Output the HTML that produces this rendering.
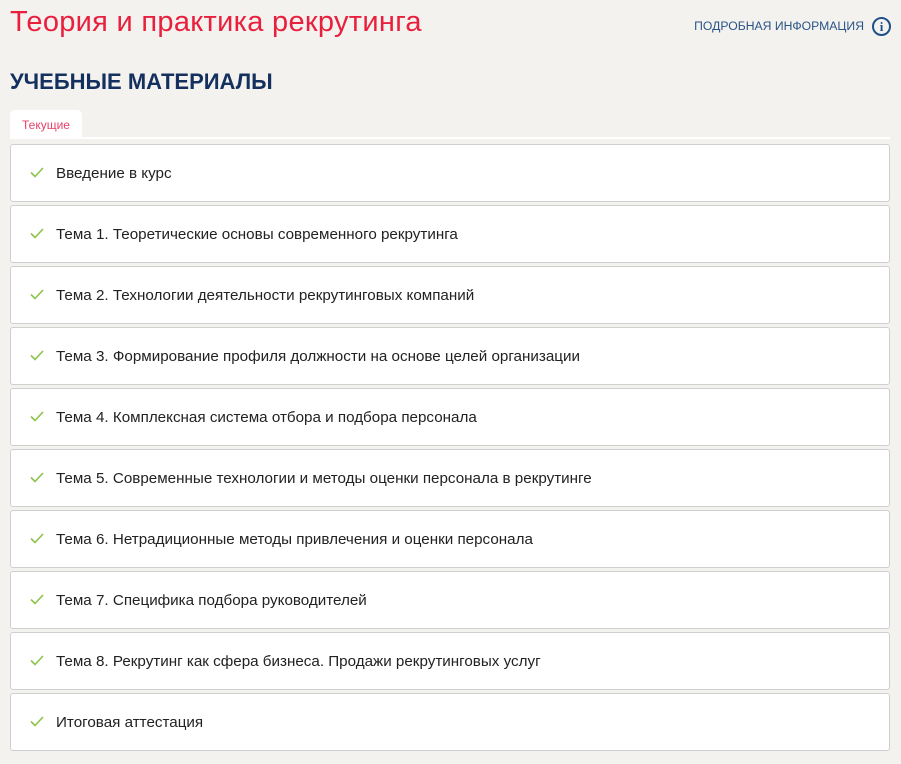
<!DOCTYPE html>
<html><head><meta charset="utf-8"><style>
body{margin:0;background:#f3f2ef;font-family:"Liberation Sans",sans-serif;width:901px;height:764px;overflow:hidden;position:relative}
.t{position:absolute;left:10px;top:6px;font-size:29px;color:#e8203e;letter-spacing:0.3px}
.info{position:absolute;right:37px;top:19px;font-size:12.2px;color:#2a5486}
.ic{position:absolute;left:872px;top:17px;width:15px;height:15px;border:2px solid #1e4f8a;border-radius:50%;color:#1e4f8a;font-size:13px;font-weight:bold;text-align:center;line-height:15px;font-family:"Liberation Serif",serif}
.h{position:absolute;left:10px;top:69px;font-size:22px;font-weight:bold;color:#14305e}
.tab{position:absolute;left:10px;top:110px;width:72px;height:28px;background:#fff;border-radius:5px 5px 0 0;font-size:12px;color:#e8416a;text-align:center;line-height:30px}
.line{position:absolute;left:10px;top:137px;width:880px;height:2px;background:#fff}
.r{position:absolute;left:10px;width:878px;height:56px;background:#fff;border:1px solid #cfcfcf;border-radius:3px;font-size:15.2px;color:#222;line-height:58px}
.r span{position:absolute;left:45px}
.r svg{position:absolute;left:19px;top:22px}
</style></head><body>
<div class="t">Теория и практика рекрутинга</div>
<div class="info">ПОДРОБНАЯ ИНФОРМАЦИЯ</div>
<div class="ic">i</div>
<div class="h">УЧЕБНЫЕ МАТЕРИАЛЫ</div>
<div class="tab">Текущие</div>
<div class="line"></div>
<div class="r" style="top:144px"><svg width="14" height="11"><path d="M1 5.5l4 4L13 1" fill="none" stroke="#8bc34a" stroke-width="1.6"/></svg><span>Введение в курс</span></div>
<div class="r" style="top:205px"><svg width="14" height="11"><path d="M1 5.5l4 4L13 1" fill="none" stroke="#8bc34a" stroke-width="1.6"/></svg><span>Тема 1. Теоретические основы современного рекрутинга</span></div>
<div class="r" style="top:266px"><svg width="14" height="11"><path d="M1 5.5l4 4L13 1" fill="none" stroke="#8bc34a" stroke-width="1.6"/></svg><span>Тема 2. Технологии деятельности рекрутинговых компаний</span></div>
<div class="r" style="top:327px"><svg width="14" height="11"><path d="M1 5.5l4 4L13 1" fill="none" stroke="#8bc34a" stroke-width="1.6"/></svg><span>Тема 3. Формирование профиля должности на основе целей организации</span></div>
<div class="r" style="top:388px"><svg width="14" height="11"><path d="M1 5.5l4 4L13 1" fill="none" stroke="#8bc34a" stroke-width="1.6"/></svg><span>Тема 4. Комплексная система отбора и подбора персонала</span></div>
<div class="r" style="top:449px"><svg width="14" height="11"><path d="M1 5.5l4 4L13 1" fill="none" stroke="#8bc34a" stroke-width="1.6"/></svg><span>Тема 5. Современные технологии и методы оценки персонала в рекрутинге</span></div>
<div class="r" style="top:510px"><svg width="14" height="11"><path d="M1 5.5l4 4L13 1" fill="none" stroke="#8bc34a" stroke-width="1.6"/></svg><span>Тема 6. Нетрадиционные методы привлечения и оценки персонала</span></div>
<div class="r" style="top:571px"><svg width="14" height="11"><path d="M1 5.5l4 4L13 1" fill="none" stroke="#8bc34a" stroke-width="1.6"/></svg><span>Тема 7. Специфика подбора руководителей</span></div>
<div class="r" style="top:632px"><svg width="14" height="11"><path d="M1 5.5l4 4L13 1" fill="none" stroke="#8bc34a" stroke-width="1.6"/></svg><span>Тема 8. Рекрутинг как сфера бизнеса. Продажи рекрутинговых услуг</span></div>
<div class="r" style="top:693px"><svg width="14" height="11"><path d="M1 5.5l4 4L13 1" fill="none" stroke="#8bc34a" stroke-width="1.6"/></svg><span>Итоговая аттестация</span></div>
</body></html>
